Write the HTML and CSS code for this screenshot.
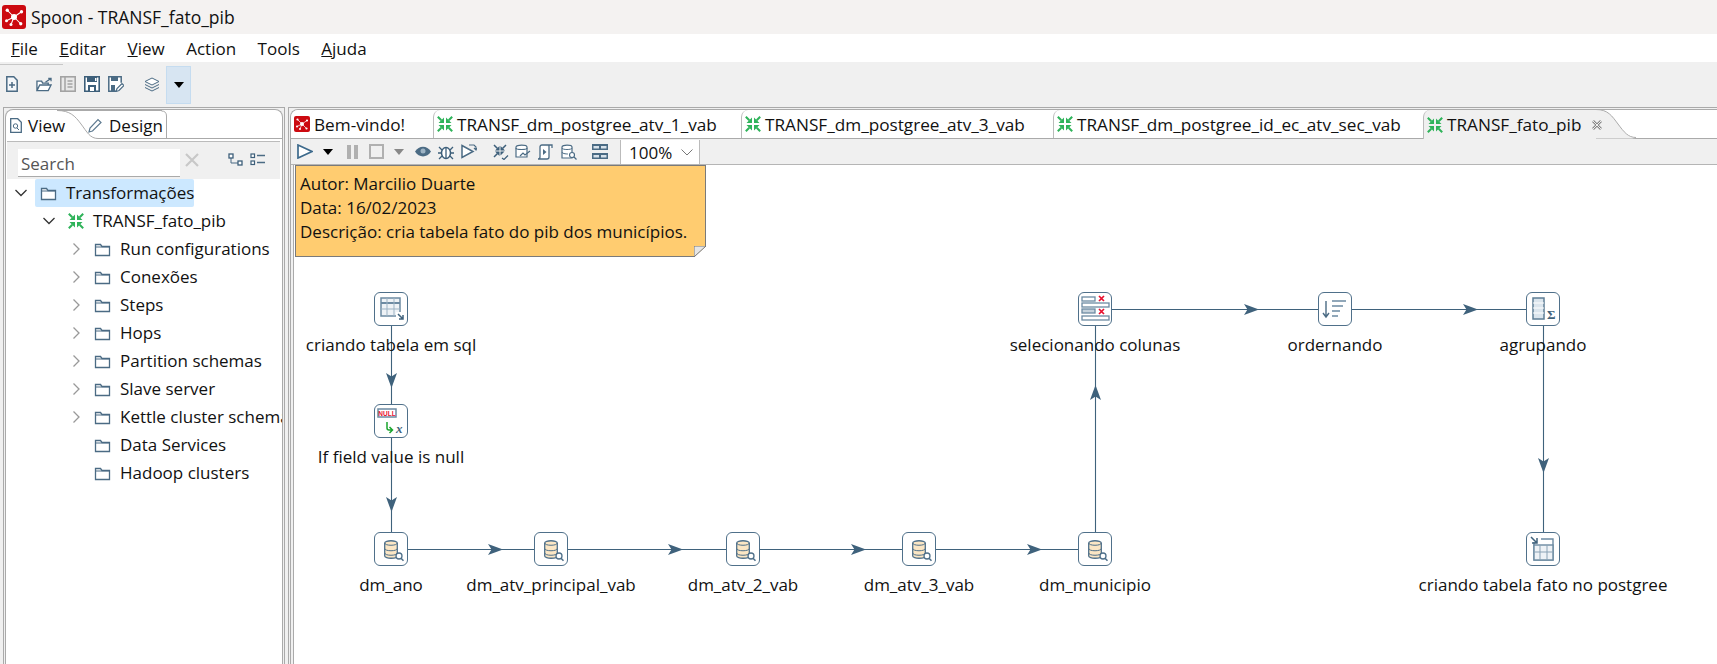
FILE: index.html
```html
<!DOCTYPE html>
<html lang="pt">
<head>
<meta charset="utf-8">
<title>Spoon - TRANSF_fato_pib</title>
<link rel="stylesheet" href="styles.css">
</head>
<body>
<svg class="defs" width="0" height="0">
  <defs>
    <g id="kettle"><g fill="#2fb35a"><path d="M7 7V1.500L1.500 7zM9 7V1.500L14.500 7zM7 9v5.500L1.500 9zM9 9v5.500L14.500 9z"/></g><path d="M.8.800l3.500 3.500M15.200.800l-3.500 3.500M.8 15.200l3.500-3.500M15.200 15.200l-3.500-3.500" stroke="#2fb35a" stroke-width="2"/></g>
    <g id="spoon"><rect width="16" height="16" rx="2" fill="#cc0a10"/><path d="M8 8L3.500 3.500M8 8l5-3.500M8 8l-5 2.500M8 8l-2 5M8 8l4.500 4.500" stroke="#fff" stroke-width=".7"/><circle cx="8" cy="8" r="2" fill="#fff"/><circle cx="3.500" cy="3.500" r="1.100" fill="#fff"/><circle cx="13" cy="4.500" r="1.100" fill="#fff"/><circle cx="3" cy="10.500" r="1" fill="#fff"/><circle cx="6" cy="13" r="1" fill="#fff"/><circle cx="12.500" cy="12.500" r="1.100" fill="#fff"/></g>
    <g id="folder"><path d="M1.500 2.500h5l1.500 2h7.500v9h-14z" fill="#fff" stroke="#4b6b84" stroke-width="1.300"/><path d="M1.500 5h14" stroke="#4b6b84"/></g>
    <g id="db"><path d="M.7 3C.7 0 13.300 0 13.300 3V16C13.300 19 .7 19 .7 16z" fill="#fbe6c4" stroke="#4f708a" stroke-width="1.300"/><path d="M.7 3c0 3 12.600 3 12.600 0M.7 8.500c0 3 12.600 3 12.600 0M.7 13c0 3 12.600 3 12.600 0" fill="none" stroke="#4f708a"/><circle cx="15" cy="16" r="3" fill="#fff" stroke="#4f708a" stroke-width="1.300"/><path d="M17 18.200l2.500 2.500" stroke="#4f708a" stroke-width="1.600"/></g>
  </defs>
</svg>

<header class="titlebar">
  <svg class="app-icon" viewBox="0 0 16 16"><use href="#spoon"/></svg>
  <span>Spoon - TRANSF_fato_pib</span>
</header>

<nav class="menubar">
  <span><u>F</u>ile</span><span><u>E</u>ditar</span><span><u>V</u>iew</span><span>Action</span><span>Tools</span><span><u>A</u>juda</span>
</nav>

<div class="toolbar">
  <svg class="tb t-new" viewBox="0 0 12 16"><path d="M.8.800h7l3.400 3.400v11H.8z" fill="#f4f7fa" stroke="#4b6b84" stroke-width="1.500"/><path d="M6 6v6M3 9h6" stroke="#4b6b84" stroke-width="1.500"/></svg>
  <svg class="tb t-open" viewBox="0 0 17 15"><path d="M1 14V4h5l1 2h6v2M1 14l3-6h12l-3 6z" fill="#fff" stroke="#4b6b84" stroke-width="1.400"/><path d="M10 5l6-4M13 1h3v3" fill="none" stroke="#4b6b84" stroke-width="1.300"/></svg>
  <svg class="tb t-gray" viewBox="0 0 16 16"><rect x=".8" y=".8" width="14.400" height="14.400" fill="#e8e8e8" stroke="#a3a3a3" stroke-width="1.600"/><path d="M5 1v14" stroke="#a3a3a3" stroke-width="1.500"/><path d="M7.500 5h5M7.500 8h5M7.500 11h5" stroke="#a3a3a3" stroke-width="1.500"/></svg>
  <svg class="tb t-save" viewBox="0 0 16 16"><path d="M.8.800h14.400v14.400H.8z" fill="#fff" stroke="#3d5f7a" stroke-width="1.600"/><rect x="3" y="1" width="10" height="5" fill="#3d5f7a"/><rect x="11" y="2" width="1.500" height="3" fill="#fff"/><rect x="4" y="9" width="8" height="6" fill="#3d5f7a"/><rect x="6" y="11" width="4" height="4" fill="#fff"/></svg>
  <svg class="tb t-saveas" viewBox="0 0 16 16"><path d="M8 15.200H.8V.800h12.400v6" fill="#fff" stroke="#4b6b84" stroke-width="1.500"/><rect x="3" y="1" width="7" height="4" fill="#4b6b84"/><rect x="3" y="9" width="4" height="6" fill="#4b6b84"/><path d="M8 15.500l1-3 5-5 2 2-5 5z" fill="#fff" stroke="#4b6b84" stroke-width="1.200"/></svg>
  <svg class="tb t-layers" viewBox="0 0 16 15"><path d="M8 1l7 3.500L8 8 1 4.500z" fill="#fff" stroke="#4b6b84"/><path d="M1 7.500L8 11l7-3.500M1 10.500L8 14l7-3.500" fill="none" stroke="#4b6b84"/></svg>
  <div class="perspective"><i class="caret"></i></div>
</div>

<main class="workspace">
  <aside class="side">
    <div class="side-inner">
      <div class="side-tabs">
        <svg class="tabline" width="277" height="29" viewBox="0 0 277 29"><path d="M51 .5C64 .5 69 6 75 14S84 28.500 92 28.500H277" fill="none" stroke="#aaa"/><path d="M160.500 28V6q0-5-5-5" fill="none" stroke="#aaa"/><path d="M51 .5H156" fill="none" stroke="#aaa"/></svg>
        <div class="stab stab-view">
          <svg width="12" height="15" viewBox="0 0 12 15"><path d="M.7.700h7l3.600 3.600v10H.7z" fill="#fff" stroke="#4b6b84" stroke-width="1.300"/><circle cx="5.500" cy="8" r="2.200" fill="none" stroke="#4b6b84"/><path d="M7 10l2 2" stroke="#4b6b84"/></svg>
          <span>View</span>
        </div>
        <div class="stab stab-design">
          <svg width="15" height="15" viewBox="0 0 15 15"><path d="M1 14l1-4 8-8.500 3 3L4.500 13z" fill="#fff" stroke="#5e7a90" stroke-width="1.200"/></svg>
          <span>Design</span>
        </div>
      </div>
      <div class="search-row">
        <div class="search">Search</div>
        <svg class="clear" width="14" height="14" viewBox="0 0 14 14"><path d="M1 1l12 12M13 1L1 13" stroke="#c8c8c8" stroke-width="2.200"/></svg>
        <svg class="s-a" width="15" height="13" viewBox="0 0 15 13"><path d="M3 4v6h7" fill="none" stroke="#4b6b84"/><rect x="1" y="1" width="4" height="4" fill="#fff" stroke="#3d5f7a" stroke-width="1.300"/><rect x="10" y="8" width="4" height="4" fill="#fff" stroke="#3d5f7a" stroke-width="1.300"/></svg>
        <svg class="s-b" width="16" height="13" viewBox="0 0 16 13"><rect x="1" y="1" width="3.500" height="3.500" fill="#fff" stroke="#3d5f7a" stroke-width="1.200"/><rect x="1" y="8" width="3.500" height="3.500" fill="#fff" stroke="#3d5f7a" stroke-width="1.200"/><path d="M7 2.500h8M7 9.500h8" stroke="#4b6b84" stroke-width="1.300"/></svg>
      </div>
      <ul class="tree">
        <li class="row lvl0">
          <svg class="tw" viewBox="0 0 12 12"><path d="M.5 3l5.500 5.500L11.500 3" fill="none" stroke="#333" stroke-width="1.300"/></svg>
          <div class="selected"><svg class="fld" viewBox="0 0 17 15"><use href="#folder"/></svg><span>Transformações</span></div>
        </li>
        <li class="row lvl1">
          <svg class="tw" viewBox="0 0 12 12"><path d="M.5 3l5.500 5.500L11.500 3" fill="none" stroke="#333" stroke-width="1.300"/></svg>
          <svg class="kt" viewBox="0 0 16 16"><use href="#kettle"/></svg><span>TRANSF_fato_pib</span>
        </li>
        <li class="row lvl2"><svg class="tw" viewBox="0 0 12 12"><path d="M3.500.5L9 6l-5.500 5.500" fill="none" stroke="#999" stroke-width="1.300"/></svg><svg class="fld" viewBox="0 0 17 15"><use href="#folder"/></svg><span>Run configurations</span></li>
        <li class="row lvl2"><svg class="tw" viewBox="0 0 12 12"><path d="M3.500.5L9 6l-5.500 5.500" fill="none" stroke="#999" stroke-width="1.300"/></svg><svg class="fld" viewBox="0 0 17 15"><use href="#folder"/></svg><span>Conexões</span></li>
        <li class="row lvl2"><svg class="tw" viewBox="0 0 12 12"><path d="M3.500.5L9 6l-5.500 5.500" fill="none" stroke="#999" stroke-width="1.300"/></svg><svg class="fld" viewBox="0 0 17 15"><use href="#folder"/></svg><span>Steps</span></li>
        <li class="row lvl2"><svg class="tw" viewBox="0 0 12 12"><path d="M3.500.5L9 6l-5.500 5.500" fill="none" stroke="#999" stroke-width="1.300"/></svg><svg class="fld" viewBox="0 0 17 15"><use href="#folder"/></svg><span>Hops</span></li>
        <li class="row lvl2"><svg class="tw" viewBox="0 0 12 12"><path d="M3.500.5L9 6l-5.500 5.500" fill="none" stroke="#999" stroke-width="1.300"/></svg><svg class="fld" viewBox="0 0 17 15"><use href="#folder"/></svg><span>Partition schemas</span></li>
        <li class="row lvl2"><svg class="tw" viewBox="0 0 12 12"><path d="M3.500.5L9 6l-5.500 5.500" fill="none" stroke="#999" stroke-width="1.300"/></svg><svg class="fld" viewBox="0 0 17 15"><use href="#folder"/></svg><span>Slave server</span></li>
        <li class="row lvl2"><svg class="tw" viewBox="0 0 12 12"><path d="M3.500.5L9 6l-5.500 5.500" fill="none" stroke="#999" stroke-width="1.300"/></svg><svg class="fld" viewBox="0 0 17 15"><use href="#folder"/></svg><span>Kettle cluster schemas</span></li>
        <li class="row lvl2"><span class="tw"></span><svg class="fld" viewBox="0 0 17 15"><use href="#folder"/></svg><span>Data Services</span></li>
        <li class="row lvl2"><span class="tw"></span><svg class="fld" viewBox="0 0 17 15"><use href="#folder"/></svg><span>Hadoop clusters</span></li>
      </ul>
    </div>
  </aside>

  <section class="editor">
    <div class="editor-inner">
      <div class="tabs">
        <div class="tab t1"><svg class="ti" viewBox="0 0 16 16"><use href="#spoon"/></svg><span>Bem-vindo!</span></div>
        <div class="tab t2"><svg class="ti" viewBox="0 0 16 16"><use href="#kettle"/></svg><span>TRANSF_dm_postgree_atv_1_vab</span></div>
        <div class="tab t3"><svg class="ti" viewBox="0 0 16 16"><use href="#kettle"/></svg><span>TRANSF_dm_postgree_atv_3_vab</span></div>
        <div class="tab t4"><svg class="ti" viewBox="0 0 16 16"><use href="#kettle"/></svg><span>TRANSF_dm_postgree_id_ec_atv_sec_vab</span></div>
        <div class="tab active"><svg class="ti" viewBox="0 0 16 16"><use href="#kettle"/></svg><span>TRANSF_fato_pib</span><svg class="close" width="10" height="10" viewBox="0 0 10 10"><path d="M1 1l8 8M9 1L1 9" stroke="#888" stroke-width="2.600"/><path d="M1 1l8 8M9 1L1 9" stroke="#f0f0f0" stroke-width="1"/></svg>
          <svg class="tab-curve" width="40" height="30" viewBox="0 0 40 30"><path d="M0 .5C12 .5 16 7 22 15S32 29.500 40 29.500H0z" fill="#f0f0f0"/><path d="M0 .5C12 .5 16 7 22 15S32 28.500 40 28.500" fill="none" stroke="#aaa"/></svg>
        </div>
      </div>
      <div class="edit-tools">
        <svg class="play" width="16" height="15" viewBox="0 0 16 15"><path d="M1 1l14 6.500L1 14z" fill="#fff" stroke="#3d6a8c" stroke-width="1.700"/></svg>
        <i class="caret small-caret"></i>
        <div class="pause"><b></b><b></b></div>
        <div class="stop"></div>
        <i class="caret gray-caret"></i>
        <svg class="eye" width="16" height="11" viewBox="0 0 16 11"><path d="M0 5.500C4-1 12-1 16 5.500 12 12 4 12 0 5.500z" fill="#4b6b84"/><circle cx="8" cy="5" r="2.500" fill="#9db3c4"/></svg>
        <svg class="bug" width="16" height="16" viewBox="0 0 16 16"><ellipse cx="8" cy="9" rx="4.500" ry="5.500" fill="#fff" stroke="#3d5f7a" stroke-width="1.500"/><path d="M8 4v10M1 3l3 3M15 3l-3 3M0 9h3M13 9h3M1 15l3-3M15 15l-3-3" stroke="#3d5f7a" stroke-width="1.300"/></svg>
        <svg class="replay" width="16" height="15" viewBox="0 0 16 15"><path d="M1 1.500l11 6-11 6z" fill="#fff" stroke="#4b6b84" stroke-width="1.500"/><path d="M8 1h5l2 2v3M13 4l2 2 1-2" fill="none" stroke="#4b6b84" stroke-width="1.100"/></svg>
        <svg class="verify" width="16" height="16" viewBox="0 0 16 16"><path d="M1 1l3.500 3.500M13 1L9.500 4.500M1 13l3.500-3.500" stroke="#3d5f7a" stroke-width="1.500"/><path d="M6.500 6.500V2l-4.500 4.500zM7.500 6.500V2l4.500 4.500zM6.500 7.500V12L2 7.500zM7.500 7.500h4l-4 4z" fill="#3d5f7a"/><path d="M9 14l2 1.500 4-4" fill="none" stroke="#3d5f7a" stroke-width="1.200"/></svg>
        <svg class="impact" width="16" height="16" viewBox="0 0 16 16"><path d="M1 3c0-2.500 11-2.500 11 0v10H1z" fill="#fff" stroke="#4b6b84" stroke-width="1.200"/><path d="M1 4c0 2 11 2 11 0M5 12l3-3 2 2 5-4" fill="none" stroke="#4b6b84" stroke-width="1.200"/></svg>
        <svg class="script" width="15" height="16" viewBox="0 0 15 16"><path d="M4 1h10v3M4 1C2.500 1 2 2 2 3v10c0 2-2 2-2 2h9c2 0 2-2 2-2V1" fill="#fff" stroke="#4b6b84" stroke-width="1.300"/><path d="M5 5v6l3.500-3z" fill="#4b6b84"/></svg>
        <svg class="dbq" width="16" height="16" viewBox="0 0 16 16"><path d="M1 3c0-2.500 10-2.500 10 0v11H1z" fill="#fff" stroke="#4b6b84" stroke-width="1.200"/><path d="M1 4c0 2 10 2 10 0M1 8c0 2 6 2 6 2" fill="none" stroke="#4b6b84"/><circle cx="11" cy="11" r="2.500" fill="#fff" stroke="#4b6b84" stroke-width="1.200"/><path d="M13 13l2.500 2.500" stroke="#4b6b84" stroke-width="1.300"/></svg>
        <svg class="grid" width="16" height="15" viewBox="0 0 16 15"><path d="M0 0h16v6H0zM0 9h16v6H0z" fill="#4b6b84"/><path d="M1.500 2h5.500v2.500H1.500zM9 2h5.500v2.500H9zM1.500 11h5.500v2.500H1.500zM9 11h5.500v2.500H9z" fill="#d8e2ea"/></svg>
        <div class="zoom"><span>100%</span><svg width="12" height="7" viewBox="0 0 12 7"><path d="M.5.500l5.500 5.500 5.500-5.500" fill="none" stroke="#777"/></svg></div>
      </div>

      <div class="canvas">
        <div class="note">Autor: Marcilio Duarte<br>Data: 16/02/2023<br>Descrição: cria tabela fato do pib dos municípios.<svg class="fold" width="12" height="11" viewBox="0 0 12 11"><path d="M12 0v11H0z" fill="#fff"/><path d="M0 0h12L0 11z" fill="#e6e6e6"/><path d="M0 0v11L12 0z" fill="none" stroke="#777"/></svg></div>

        <svg class="hops" width="1423" height="499" viewBox="294 165 1423 499">
          <path class="hop-lines" d="M391.500 326V404M391.500 438V532M408 549.500H534M568 549.500H726M760 549.500H902M936 549.500H1078M1095.500 532V326M1112 309.500H1318M1352 309.500H1526M1543.500 326V532"/>
          <g class="hop-heads">
            <path d="M391.500 388l-5.500-15 5.500 3.500 5.500-3.500z"/>
            <path d="M391.500 512l-5.500-15 5.500 3.500 5.500-3.500z"/>
            <path d="M503 549.500l-15-5.500 3.500 5.500-3.500 5.500z"/>
            <path d="M683 549.500l-15-5.500 3.500 5.500-3.500 5.500z"/>
            <path d="M866 549.500l-15-5.500 3.500 5.500-3.500 5.500z"/>
            <path d="M1042 549.500l-15-5.500 3.500 5.500-3.500 5.500z"/>
            <path d="M1095.500 385l-5.500 15 5.500-3.500 5.500 3.500z"/>
            <path d="M1259 309.500l-15-5.500 3.500 5.500-3.500 5.500z"/>
            <path d="M1478 309.500l-15-5.500 3.500 5.500-3.500 5.500z"/>
            <path d="M1543.500 473l-5.500-15 5.500 3.500 5.500-3.500z"/>
          </g>
        </svg>

        <div class="node" style="left:374px;top:292px"><svg viewBox="0 0 32 32"><rect x="6" y="5" width="19" height="18" fill="#eef2f6" stroke="#6c8aa2" stroke-width="1.500"/><path d="M6 10h19" stroke="#6c8aa2" stroke-width="2"/><path d="M6 16h19M12 5v18M19 5v18" stroke="#9db3c4"/><rect x="21" y="19" width="8" height="9" fill="#fff"/><path d="M23 21l5 5M28 22v4h-4" fill="none" stroke="#3f627c" stroke-width="1.500"/></svg></div>
        <div class="label" style="left:391px;top:333px">criando tabela em sql</div>

        <div class="node" style="left:374px;top:404px"><svg viewBox="0 0 32 32"><rect x="3" y="4" width="18" height="8" fill="#fff" stroke="#6c8aa2" stroke-width="1.500"/><text x="12" y="10.500" class="null">NULL</text><path d="M12 17v6q0 2 2 2h3M14.500 22l3 3-3 3" fill="none" stroke="#1aa52e" stroke-width="1.500"/><text x="21" y="28" class="x">x</text></svg></div>
        <div class="label" style="left:391px;top:445px">If field value is null</div>

        <div class="node" style="left:374px;top:532px"><svg viewBox="0 0 32 32"><use href="#db" x="9" y="7"/></svg></div>
        <div class="label" style="left:391px;top:573px">dm_ano</div>

        <div class="node" style="left:534px;top:532px"><svg viewBox="0 0 32 32"><use href="#db" x="9" y="7"/></svg></div>
        <div class="label" style="left:551px;top:573px">dm_atv_principal_vab</div>

        <div class="node" style="left:726px;top:532px"><svg viewBox="0 0 32 32"><use href="#db" x="9" y="7"/></svg></div>
        <div class="label" style="left:743px;top:573px">dm_atv_2_vab</div>

        <div class="node" style="left:902px;top:532px"><svg viewBox="0 0 32 32"><use href="#db" x="9" y="7"/></svg></div>
        <div class="label" style="left:919px;top:573px">dm_atv_3_vab</div>

        <div class="node" style="left:1078px;top:532px"><svg viewBox="0 0 32 32"><use href="#db" x="9" y="7"/></svg></div>
        <div class="label" style="left:1095px;top:573px">dm_municipio</div>

        <div class="node" style="left:1078px;top:292px"><svg viewBox="0 0 32 32"><g fill="#fff" stroke="#6c8aa2" stroke-width="1.300"><rect x="3" y="4" width="13" height="4"/><rect x="3" y="10" width="27" height="4"/><rect x="3" y="16" width="13" height="4" fill="#c5d2dc"/><rect x="3" y="23" width="27" height="4"/></g><path d="M20 3l5 5M25 3l-5 5M20 16l5 5M25 16l-5 5" stroke="#e8102e" stroke-width="1.700"/></svg></div>
        <div class="label" style="left:1095px;top:333px">selecionando colunas</div>

        <div class="node" style="left:1318px;top:292px"><svg viewBox="0 0 32 32"><path d="M7 8v16M4 20l3 4 3-4" fill="none" stroke="#4b6b84" stroke-width="1.400"/><path d="M13 8h14M13 13h11M13 18h8M13 23h6" stroke="#6c8aa2" stroke-width="1.400"/></svg></div>
        <div class="label" style="left:1335px;top:333px">ordernando</div>

        <div class="node" style="left:1526px;top:292px"><svg viewBox="0 0 32 32"><rect x="6" y="5" width="11" height="21" fill="#dbe5ed" stroke="#5e7d95" stroke-width="1.500"/><path d="M6 10h11M6 15h11M6 20h11" stroke="#fff"/><text x="20" y="26" class="sigma">Σ</text></svg></div>
        <div class="label" style="left:1543px;top:333px">agrupando</div>

        <div class="node" style="left:1526px;top:532px"><svg viewBox="0 0 32 32"><path d="M7 9v18h19V6H14" fill="#fff" stroke="#6c8aa2" stroke-width="1.400"/><rect x="7" y="12" width="19" height="15" fill="#eef2f6" stroke="#6c8aa2" stroke-width="1.400"/><path d="M7 19h19M13 12v15M20 12v15" stroke="#8aa2b5"/><path d="M4 4l6 6M10 5v5H5" fill="none" stroke="#3f627c" stroke-width="1.500"/></svg></div>
        <div class="label" style="left:1543px;top:573px">criando tabela fato no postgree</div>
      </div>
    </div>
  </section>
</main>
</body>
</html>
```
FILE: styles.css
```css
* { box-sizing: border-box; }
html, body { margin: 0; height: 664px; overflow: hidden; }
body { font-family: "Open Sans", "Noto Sans", sans-serif; font-size: 17px; color: #111; background: #f0f0f0; display: flex; flex-direction: column; }
.defs { position: absolute; }
span, div { white-space: nowrap; }
ul { list-style: none; margin: 0; padding: 0; }

.titlebar { height: 34px; background: #f4f2f1; display: flex; align-items: center; gap: 5px; padding-left: 2px; font-size: 17.5px; flex: none; }
.app-icon { width: 24px; height: 24px; }

.menubar { height: 28px; background: #fff; display: flex; align-items: center; padding: 1px 0 0 11px; gap: 21.500px; flex: none; }

.toolbar { height: 43px; flex: none; position: relative; display: flex; align-items: center; padding: 1px 0 0 6px; }
.toolbar::before { content: ""; position: absolute; left: 0; top: 2px; width: 63px; height: 1px; background: #c8c8c8; }
.tb { display: block; flex: none; }
.t-new { width: 12px; height: 16px; margin-right: 18px; }
.t-open { width: 16px; height: 15px; margin-right: 8px; }
.t-gray { width: 16px; height: 16px; margin-right: 8px; }
.t-save { width: 16px; height: 16px; margin-right: 8px; }
.t-saveas { width: 16px; height: 16px; margin-right: 20px; }
.t-layers { width: 16px; height: 15px; margin-right: 6px; }
.perspective { width: 25px; height: 38px; background: #d7e5f2; border: 1px solid #c5dcf0; display: flex; align-items: center; justify-content: center; margin-top: 1px; }
.caret { display: block; flex: none; width: 0; height: 0; border-left: 5.500px solid transparent; border-right: 5.500px solid transparent; border-top: 6px solid #000; }

.workspace { flex: 1; display: flex; padding: 2px 0 0 3px; gap: 3px; min-height: 0; }

.side { width: 282px; flex: none; border: 1px solid #aaa; border-bottom: 0; padding: 1px 1px 0; display: flex; }
.side-inner { flex: 1; min-width: 0; background: #fff; border: 1px solid #aaa; border-bottom: 0; border-radius: 8px 8px 0 0; overflow: hidden; display: flex; flex-direction: column; }
.side-tabs { height: 29px; flex: none; display: flex; position: relative; padding-top: 2px; }
.tabline { position: absolute; left: 0; top: 0; }
.stab { display: flex; align-items: center; gap: 6px; position: relative; }
.stab-view { width: 82px; padding-left: 4px; }
.search-row { height: 38px; flex: none; background: #f0f0f0; margin: 2px 2px 0 1px; border-top: 1px solid #bbb; display: flex; align-items: flex-start; padding: 7px 0 0 11px; }
.search { width: 162px; height: 28px; background: #fff; border-bottom: 1px solid #aaa; padding: 2px 0 0 3px; color: #555; line-height: 26px; flex: none; }
.clear { margin: 4px 0 0 5px; flex: none; }
.s-a { margin: 4px 0 0 29px; flex: none; }
.s-b { margin: 4px 0 0 7px; flex: none; }

.tree { flex: 1; overflow: hidden; }
.row { height: 28px; display: flex; align-items: center; }
.row > span:last-child, .selected span { margin-bottom: 2px; }
.tw { width: 12px; height: 12px; display: block; flex: none; }
.fld { width: 17px; height: 15px; flex: none; }
.kt { width: 16px; height: 16px; flex: none; margin-right: 9px; }
.lvl0 { padding-left: 9px; }
.lvl0 .tw { margin-right: 8px; }
.selected { display: flex; align-items: center; gap: 9px; background: #cce8ff; border-radius: 2px; height: 28px; width: 159px; padding-left: 5px; }
.lvl1 { padding-left: 37px; }
.lvl1 .tw { margin-right: 13px; }
.lvl2 { padding-left: 64px; }
.lvl2 .tw { margin-right: 12px; }
.lvl2 .fld { margin-right: 9px; }

.editor { flex: 1; min-width: 0; display: flex; border-top: 1px solid #aaa; border-left: 1px solid #aaa; padding: 1px 0 0 1px; }
.editor-inner { flex: 1; min-width: 0; display: flex; flex-direction: column; background: #f0f0f0; border-top: 1px solid #aaa; border-left: 1px solid #aaa; border-top-left-radius: 8px; overflow: hidden; }
.tabs { height: 29px; flex: none; display: flex; background: #fff; border-bottom: 1px solid #aaa; }
.tab { display: flex; align-items: center; gap: 4px; padding: 0 0 0 3px; font-size: 17.200px; position: relative; flex: none; }
.tab + .tab { border-left: 1px solid #bbb; border-top-left-radius: 7px; }
.t1 { width: 142px; }
.t2 { width: 308px; }
.t3 { width: 312px; }
.t4 { width: 370px; }
.tab.active { width: 173px; background: #f0f0f0; height: 29px; }
.ti { width: 16px; height: 16px; flex: none; }
.close { margin-left: 7px; flex: none; position: relative; z-index: 1; }
.tab-curve { position: absolute; left: 100%; top: -1px; }
.edit-tools { height: 26px; flex: none; background: #f0f0f0; border-bottom: 1px solid #b5b5b5; display: flex; align-items: center; padding-left: 6px; }
.edit-tools svg { flex: none; }
.small-caret { margin-left: 10px; }
.pause { display: flex; gap: 3px; margin-left: 14px; flex: none; }
.pause b { width: 4px; height: 14px; background: #b0b0b0; display: block; }
.stop { width: 15px; height: 15px; border: 2px solid #b0b0b0; margin-left: 11px; flex: none; }
.gray-caret { margin-left: 10px; border-top-color: #888; }
.eye { margin-left: 11px; }
.bug { margin-left: 7px; }
.replay { margin-left: 7px; }
.verify { margin-left: 16px; }
.impact { margin-left: 6px; }
.script { margin-left: 7px; }
.dbq { margin-left: 8px; }
.grid { margin-left: 15px; }
.zoom { width: 80px; height: 24px; margin-left: 12px; background: #fff; border-left: 1px solid #bbb; border-right: 1px solid #bbb; display: flex; align-items: center; justify-content: space-between; padding: 0 6px 0 8px; align-self: flex-start; margin-top: 1px; flex: none; }

.canvas { flex: 1; position: relative; background: #fff; overflow: hidden; margin-left: 2px; border-left: 1px solid #aaa; }
.note { position: absolute; left: 1px; top: 0; width: 411px; height: 92px; background: #ffcc70; border: 1px solid #7a7a7a; padding: 6px 4px; line-height: 24px; }
.fold { position: absolute; right: -1px; bottom: -1px; }
.hops { position: absolute; left: 0; top: 0; }
.hop-lines { fill: none; stroke: #3f627c; stroke-width: 1.100; }
.hop-heads { fill: #3f627c; }
.node { position: absolute; width: 34px; height: 34px; margin: -165px 0 0 -294px; background: #fff; border: 1.200px solid #4f708a; border-radius: 6px; }
.node svg { display: block; width: 100%; height: 100%; }
.label { position: absolute; transform: translateX(-50%); margin: -165px 0 0 -294px; line-height: 24px; }
.null { font: bold 6.500px "Liberation Sans", sans-serif; fill: #e8102e; text-anchor: middle; }
.x { font: italic bold 13px "Liberation Serif", serif; fill: #3f627c; }
.sigma { font: bold 13px "Liberation Serif", serif; fill: #3f627c; }
```
